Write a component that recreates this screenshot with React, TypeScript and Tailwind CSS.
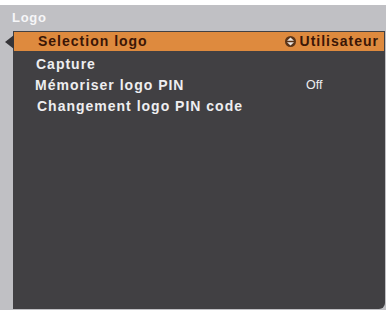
export default function App() {
  const rows = [
    { label: 'Capture', x: 'pl-[23px]' },
    { label: 'Mémoriser logo PIN', x: 'pl-[22px]', value: 'Off' },
    { label: 'Changement logo PIN code', x: 'pl-[24px]' },
  ]

  return (
    <div className="w-[390px] h-[314px] bg-white pt-[5px]" style={{ fontFamily: '"Liberation Sans", Arial, sans-serif' }}>
      <div className="w-[386px] h-[305px] bg-[#c0c0c4] flex flex-col">
        {/* Header */}
        <div className="h-[26px] flex items-center pl-[12px] text-[13px] font-bold tracking-[0.7px] text-[#f6f6f8]">
          Logo
        </div>

        {/* Panel */}
        <div className="flex-1 ml-[13px] mr-[1px] mb-[1px] bg-[#414043] rounded-br-[6px] relative pt-[1px]">
          {/* Selected row */}
          <div className="relative h-[19px] mx-[1px] bg-[#de8a3e] flex items-center justify-between pl-[24px] pr-[5px] text-[14px] font-bold tracking-[1px] text-[#3a1606]">
            <span>Selection logo</span>
            <span className="flex items-center gap-[4px]">
              <svg width="11" height="11" viewBox="0 0 10 10">
                <circle cx="5" cy="5" r="5" fill="#5a3418" />
                <path d="M5 1.4 L8.2 4.3 H1.8 Z" fill="#ece6e0" />
                <path d="M5 8.6 L8.2 5.7 H1.8 Z" fill="#ece6e0" />
              </svg>
              <span>Utilisateur</span>
            </span>
            <svg className="absolute left-[-9px] top-[3px]" width="9" height="14" viewBox="0 0 9 14">
              <path d="M0 7 L9 0 V14 Z" fill="#353438" />
            </svg>
          </div>

          <div className="mt-[3px] flex flex-col text-[14px] font-bold tracking-[1px] text-[#eeeef0]">
            {rows.map(r => (
              <div key={r.label} className={`h-[21px] flex items-center ${r.x} relative`}>
                <span>{r.label}</span>
                {r.value && (
                  <span className="absolute left-[293px] text-[12.5px] font-normal tracking-normal">{r.value}</span>
                )}
              </div>
            ))}
          </div>
        </div>
      </div>
    </div>
  )
}
